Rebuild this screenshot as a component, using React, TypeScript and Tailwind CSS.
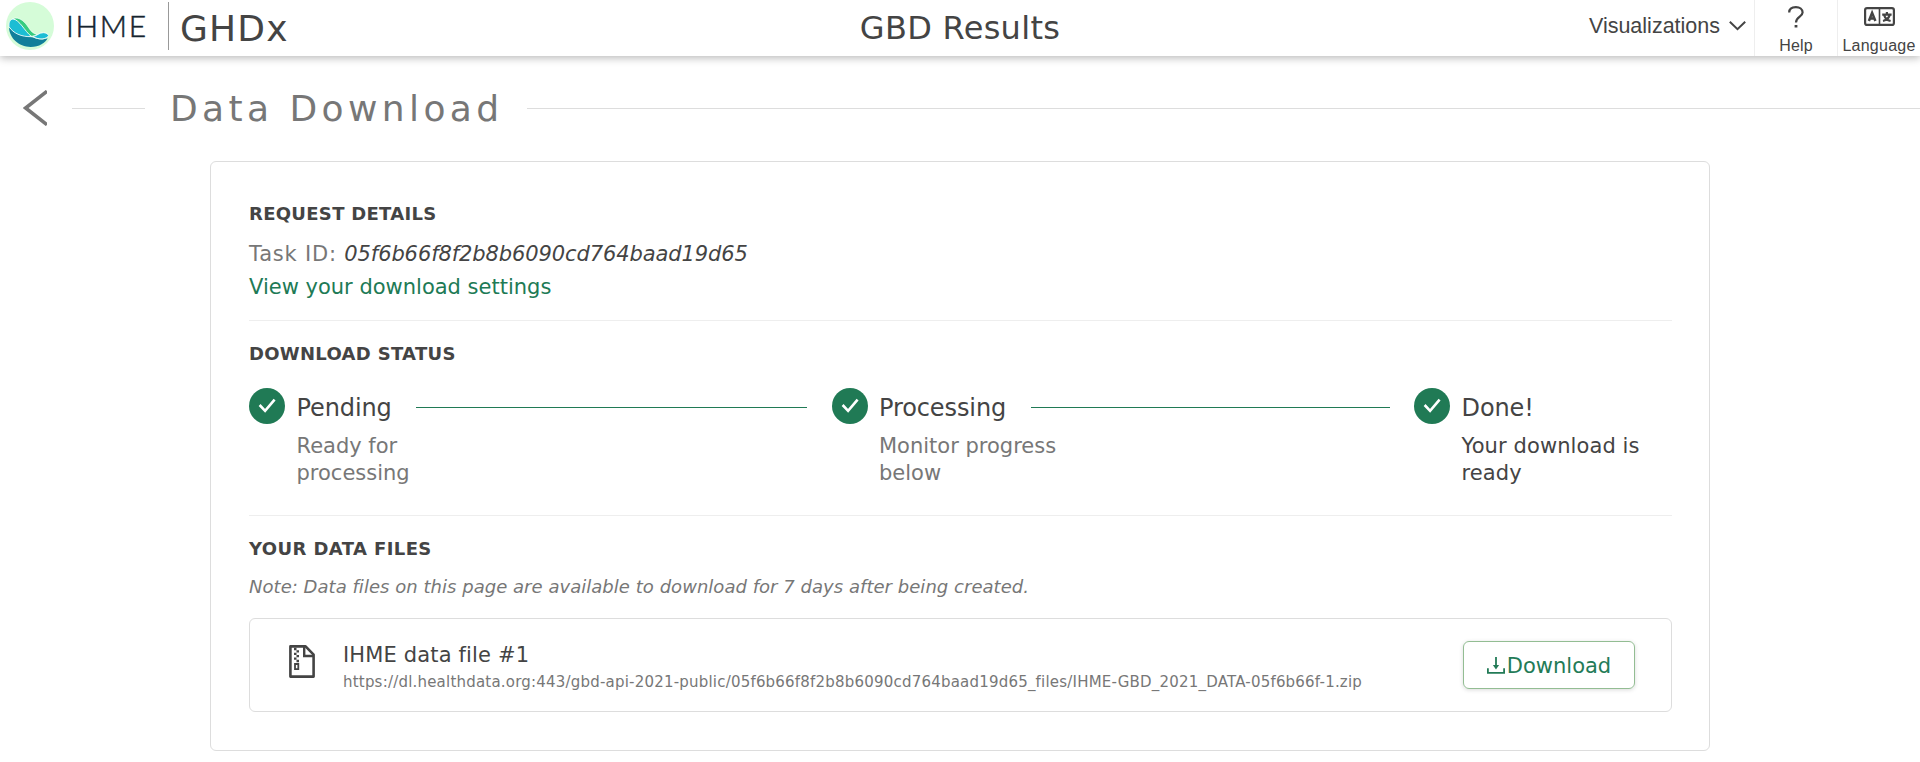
import React from "react";

function LogoMark() {
  return (
    <svg width="48" height="48" viewBox="0 0 144 144" className="shrink-0">
      <circle cx="72" cy="72" r="72" fill="#d5fcd8" />
      <path d="M9 76C10 108 38 135 74 135C100 135 118 123 125 109C106 117 88 108 72 104C46 103 24 94 9 76Z" fill="#117f9a" />
      <path d="M20 50C42 42 58 62 68 77C74 87 82 95 94 98C84 104 76 104 68 100C52 90 44 58 20 50Z" fill="#35cc7f" stroke="#fff" strokeWidth="2" />
      <path d="M9 74C8 61 12 52 21 51C42 54 54 86 77 104C46 105 22 94 9 74Z" fill="#1cbdd4" stroke="#fff" strokeWidth="2.5" />
      <path d="M80 103C94 102 98 92 112 92C120 92 126 96 128 101C122 112 98 115 80 103Z" fill="#1cbdd4" stroke="#fff" strokeWidth="2.5" />
    </svg>
  );
}

function LanguageIcon() {
  return (
    <svg width="31" height="19" viewBox="0 0 31 19" fill="none" stroke="#444" className="shrink-0">
      <rect x="1.1" y="1.1" width="28.8" height="16.8" rx="2" strokeWidth="2.2" />
      <path d="M15.5 1V18" strokeWidth="1.6" />
      <path d="M4.9 14L8.1 5.8L11.4 14M6.2 11.5H10.2" strokeWidth="2.5" />
      <path d="M18.2 7.6H27.6M22.9 5V7.6M20.2 8.2C21 11 23.3 13.2 26.6 14M25.7 8.2C24.8 11 22.4 13.2 19 14" strokeWidth="2.2" />
    </svg>
  );
}

function ZipIcon() {
  return (
    <svg width="26" height="33" viewBox="0 0 26 33" fill="none" stroke="#444" className="shrink-0">
      <path d="M1.4 1.4H16.6L24.6 9.6V31.6H1.4Z" strokeWidth="2.6" strokeLinejoin="round" />
      <path d="M15.2 1.8V11H24.5" strokeWidth="2.4" />
      <path d="M5 4H7.5M7.5 6.4H10M5 8.8H7.5M7.5 11.2H10M5 13.6H7.5M7.5 16H10" strokeWidth="2.3" />
      <path d="M6 19H9.3V24.2H6Z" strokeWidth="1.8" />
    </svg>
  );
}

function DownloadIcon() {
  return (
    <svg width="18" height="17" viewBox="0 0 18 17" fill="none" stroke="#237b57" className="shrink-0">
      <path d="M9 0V10" strokeWidth="1.8" />
      <path d="M5.9 8H12.1L9 12.4Z" fill="#237b57" stroke="none" />
      <path d="M0.9 11.3V15.8H17.1V11.3" strokeWidth="1.8" />
    </svg>
  );
}

type StepProps = { title: string; body: string; last?: boolean };

function Step({ title, body, last }: StepProps) {
  return (
    <div className={last ? "w-[257px]" : "w-[582.5px]"}>
      <div className="flex h-9 items-center">
        <svg width="36" height="36" viewBox="0 0 36 36" className="shrink-0">
          <circle cx="18" cy="18" r="18" fill="#207a55" />
          <path d="M10.6 17L16.1 22.8L25.6 11.6" fill="none" stroke="#fff" strokeWidth="2.6" />
        </svg>
        <span className="ml-[11.5px] pt-[3px] text-[24px] leading-9 tracking-[-0.1px]">{title}</span>
        {!last && <span className="mt-[2px] mr-[24.5px] ml-[24.5px] h-px flex-1 bg-[#207a55]" />}
      </div>
      <p className={last ? "mt-[9px] ml-[47.5px] w-[190px] text-[21px] leading-[27px] tracking-[0.1px]" : "mt-[9px] ml-[47.5px] w-[190px] text-[21px] leading-[27px] text-[#777]"}>
        {body}
      </p>
    </div>
  );
}

export default function App() {
  return (
    <div className="h-[762px] overflow-hidden bg-white font-['DejaVu_Sans',Verdana,sans-serif] text-[#444]">
      <header className="flex h-14 items-stretch shadow-[0_2px_8px_rgba(0,0,0,0.28)]">
        <div className="flex flex-1 items-start pt-0.5 pl-1.5">
          <LogoMark />
          <span className="ml-[12px] w-[79px] font-['Lato'] text-[30px] leading-[47px] font-light tracking-[1.7px] text-[#15242f] [-webkit-text-stroke:0.5px_#15242f]">IHME</span>
          <span className="ml-[23px] h-12 w-px bg-[#999]" />
          <span className="ml-[11px] text-[36px] leading-[53px] tracking-[1.2px]">GHDx</span>
        </div>
        <h1 className="mr-[6px] text-[32px] leading-[57px] tracking-[0.3px]">GBD Results</h1>
        <nav className="flex flex-1 justify-end font-['Liberation_Sans',Arial,sans-serif]">
          <div className="flex pr-[8px]">
            <span className="pr-[9px] text-[21.5px] leading-[53px]">Visualizations</span>
            <svg width="17" height="10" viewBox="0 0 17 10" className="mt-[21px]" fill="none" stroke="#444" strokeWidth="2">
              <path d="M0.8 0.8L8.5 8.2L16.2 0.8" />
            </svg>
          </div>
          <div className="flex w-[83px] flex-col items-center border-l border-[#eee] pt-1.5">
            <svg width="16" height="22" viewBox="0 0 16 22" fill="none" stroke="#444" strokeWidth="2.2">
              <path d="M1.2 6.6C1.2 3 4 1.2 7.9 1.2C11.8 1.2 14.6 3.2 14.6 6.6C14.6 10.6 8 10.8 8 16.4" />
              <path d="M8 19V21.5" strokeWidth="2.8" />
            </svg>
            <span className="mt-[8px] text-[16px] leading-5 tracking-[0.2px]">Help</span>
          </div>
          <div className="flex w-[83px] flex-col items-center border-l border-[#eee] pt-[7px]">
            <LanguageIcon />
            <span className="mt-[10px] text-[16px] leading-5 tracking-[0.25px]">Language</span>
          </div>
        </nav>
      </header>

      <div className="flex h-[105px] items-center">
        <svg width="24" height="36" viewBox="0 0 24 36" className="mt-[-1px] ml-[23px] shrink-0" fill="none" stroke="#777" strokeWidth="3.6">
          <path d="M24 1.3L2.6 18L24 34.7" />
        </svg>
        <span className="ml-[25px] h-px w-[73px] bg-[#ddd]" />
        <h2 className="ml-[25px] text-[36px] leading-[52px] tracking-[4.4px] text-[#777]">Data Download</h2>
        <span className="ml-[23px] h-px flex-1 bg-[#ddd]" />
      </div>

      <main className="mx-auto h-[590px] w-[1500px] rounded-md border border-[#ddd] pt-10 pr-[37px] pl-[38px]">
        <h3 className="text-[18px] leading-6 font-bold tracking-[0.3px]">REQUEST DETAILS</h3>
        <p className="mt-[12px] text-[21px] leading-[33px] whitespace-pre text-[#777]">
          <span className="tracking-[0.8px]">Task ID: </span>
          <em className="tracking-[-0.1px] text-[#444]">05f6b66f8f2b8b6090cd764baad19d65</em>
        </p>
        <a className="block text-[21px] leading-[33px] text-[#207a55]">View your download settings</a>
        <hr className="mt-[16px] border-[#eee]" />

        <h3 className="mt-[21px] text-[18px] leading-6 font-bold tracking-[0.3px]">DOWNLOAD STATUS</h3>
        <div className="mt-[22px] flex">
          <Step title="Pending" body="Ready for processing" />
          <Step title="Processing" body="Monitor progress below" />
          <Step title="Done!" body="Your download is ready" last />
        </div>
        <hr className="mt-[28px] border-[#eee]" />

        <h3 className="mt-[21px] text-[18px] leading-6 font-bold tracking-[0.4px]">YOUR DATA FILES</h3>
        <p className="mt-[14px] text-[18px] leading-6 tracking-[0.035px] text-[#777] italic">
          Note: Data files on this page are available to download for 7 days after being created.
        </p>
        <div className="mt-[19px] flex h-[94px] items-center rounded-md border border-[#ddd] pr-9 pl-[39px]">
          <div className="mt-[-8px]"><ZipIcon /></div>
          <div className="mt-[5px] ml-[28px] flex-1">
            <div className="text-[21px] leading-[29px] tracking-[0.15px]">IHME data file #1</div>
            <div className="text-[15px] leading-[25px] tracking-[0.205px] text-[#777]">
              https://dl.healthdata.org:443/gbd-api-2021-public/05f6b66f8f2b8b6090cd764baad19d65_files/IHME-GBD_2021_DATA-05f6b66f-1.zip
            </div>
          </div>
          <button className="flex h-12 w-[172px] items-center justify-center rounded-md border border-[#93bd93] text-[21px] text-[#237b57] shadow-[0_1px_4px_rgba(0,0,0,0.15)]">
            <DownloadIcon />
            <span className="mt-[3px] ml-0.5">Download</span>
          </button>
        </div>
      </main>
    </div>
  );
}
